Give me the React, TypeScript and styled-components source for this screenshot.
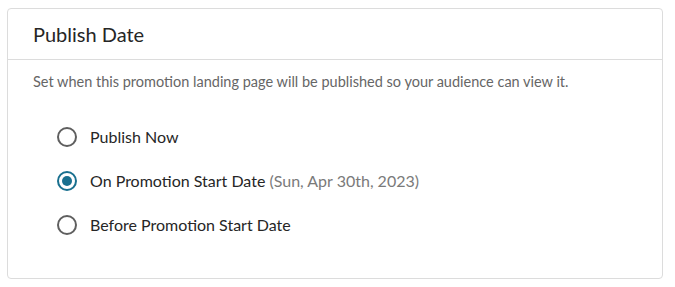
import React, { useState } from "react";
import styled, { createGlobalStyle } from "styled-components";

const GlobalStyle = createGlobalStyle`
  body {
    margin: 0;
    background: #ffffff;
    font-family: "Lato", "Open Sans", sans-serif;
  }
`;

const options = [
  { id: "now", label: "Publish Now" },
  { id: "start", label: "On Promotion Start Date", note: "(Sun, Apr 30th, 2023)" },
  { id: "before", label: "Before Promotion Start Date" },
];

const App: React.FC = () => {
  const [selected, setSelected] = useState<string>("start");

  return (
    <>
      <GlobalStyle />
      <PageWrapper>
        <Card>
          <CardHeader>
            <h2>Publish Date</h2>
          </CardHeader>
          <CardBody>
            <Description>
              Set when this promotion landing page will be published so your
              audience can view it.
            </Description>
            <OptionList>
              {options.map((option) => (
                <OptionRow key={option.id} onClick={() => setSelected(option.id)}>
                  <RadioCircle $checked={selected === option.id} />
                  <Label>
                    {option.label}
                    {option.note && <Note> {option.note}</Note>}
                  </Label>
                </OptionRow>
              ))}
            </OptionList>
          </CardBody>
        </Card>
      </PageWrapper>
    </>
  );
};

const PageWrapper = styled.main`
  padding: 8px 12px 8px 7px;
  width: 675px;
  box-sizing: border-box;
`;

const Card = styled.section`
  width: 656px;
  height: 271px;
  box-sizing: border-box;
  border: 1px solid #dcdcdc;
  border-radius: 4px;
  background: #ffffff;
  color: #2b2b2b;
`;

const CardHeader = styled.header`
  display: flex;
  align-items: center;
  height: 51px;
  padding: 0 25px 1px;
  box-sizing: border-box;
  border-bottom: 1px solid #dcdcdc;

  & > h2 {
    margin: 0;
    font-size: 20px;
    line-height: 24px;
    font-weight: 400;
    color: #262626;
  }
`;

const CardBody = styled.div`
  display: flex;
  flex-direction: column;
  padding: 12px 25px 0;
`;

const Description = styled.p`
  margin: 0;
  font-size: 14.5px;
  line-height: 20px;
  color: #666666;
`;

const OptionList = styled.ul`
  display: flex;
  flex-direction: column;
  gap: 24px;
  margin: 35px 0 0;
  padding: 0 0 0 24px;
  list-style: none;
`;

const OptionRow = styled.li`
  display: flex;
  align-items: center;
  gap: 13px;
  height: 20px;
  cursor: pointer;
`;

const RadioCircle = styled.span<{ $checked: boolean }>`
  position: relative;
  width: 20px;
  height: 20px;
  box-sizing: border-box;
  border-radius: 50%;
  border: 2px solid ${({ $checked }) => ($checked ? "#19708f" : "#5f5f5f")};
  flex-shrink: 0;

  &::after {
    content: "";
    display: ${({ $checked }) => ($checked ? "block" : "none")};
    position: absolute;
    top: 3px;
    left: 3px;
    width: 10px;
    height: 10px;
    border-radius: 50%;
    background: #19708f;
  }
`;

const Label = styled.span`
  font-size: 16px;
  line-height: 20px;
  color: #262626;
`;

const Note = styled.span`
  color: #7a7a7a;
`;

export default App;
